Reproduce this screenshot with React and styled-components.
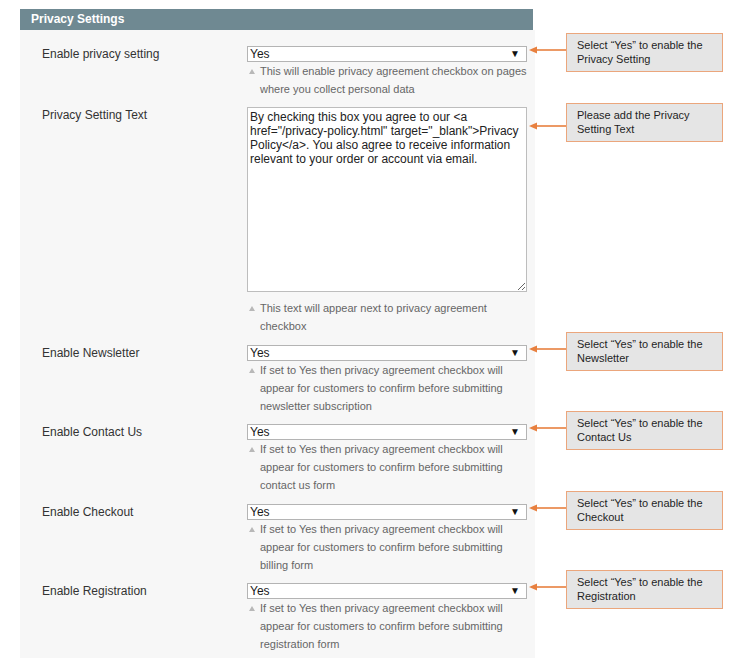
import React from "react";
import styled, { createGlobalStyle } from "styled-components";

const GlobalStyle = createGlobalStyle`
  body {
    margin: 0;
    background: #fff;
    font-family: "Liberation Sans", Arial, sans-serif;
  }
`;

const Page = styled.div`
  padding: 9px 0 0 20px;
  width: 730px;
`;

const Header = styled.div`
  width: 513px;
  height: 21px;
  padding-left: 11px;
  background: #6f8992;
  color: #fff;
  font-size: 12px;
  font-weight: bold;
  line-height: 21px;
  box-sizing: border-box;
`;

const Body = styled.div`
  width: 515px;
  padding: 7px 0 4px;
  background: #f7f7f7;
`;

const Row = styled.div`
  display: flex;
  width: 515px;
  padding-top: 9px;
`;

const FormCell = styled.div`
  flex: none;
  display: grid;
  grid-template-columns: 205px 280px;
  width: 515px;
  padding-left: 22px;
  box-sizing: border-box;
`;

const Label = styled.div`
  font-size: 12px;
  line-height: 16px;
  color: #333;
`;

const Field = styled.div`
  display: flex;
  flex-direction: column;
`;

const Select = styled.div`
  display: flex;
  align-items: center;
  justify-content: space-between;
  height: 16px;
  padding: 0 6px 0 2px;
  border: 1px solid #b4b4b4;
  background: #fff;
  box-sizing: border-box;
  font-size: 12px;
  color: #1a1a1a;
`;

const Caret = styled.span`
  font-size: 10px;
  line-height: 10px;
  color: #111;
`;

const TextArea = styled.textarea`
  display: block;
  width: 280px;
  height: 185px;
  margin: 0;
  padding: 2px 2px;
  border: 1px solid #bdbdbd;
  box-sizing: border-box;
  font-family: "Liberation Sans", Arial, sans-serif;
  font-size: 12px;
  line-height: 14px;
  color: #222;
  background: #fff;
  outline: none;
`;

const Note = styled.div`
  position: relative;
  margin-top: ${(p) => p.$gap || 0}px;
  padding-left: 13px;
  font-size: 11px;
  line-height: 18.15px;
  color: #666;

  &::before {
    content: "";
    position: absolute;
    left: 2px;
    top: 7px;
    border-left: 3px solid transparent;
    border-right: 3px solid transparent;
    border-bottom: 5px solid #b8b8b8;
  }
`;

const Annotation = styled.div`
  display: flex;
  align-items: flex-start;
  flex: none;
  margin-left: -6px;
  margin-top: ${(p) => p.$offset}px;
  width: 0;
`;

const Pointer = styled.svg`
  flex: none;
  margin-top: ${(p) => p.$drop}px;
`;

const Callout = styled.div`
  flex: none;
  width: 157px;
  height: 39px;
  padding: 4px 10px;
  box-sizing: border-box;
  background: #e5e5e5;
  border: 1px solid #eba67c;
  font-size: 11px;
  line-height: 14px;
  color: #1f1f1f;
`;

const Arrow = ({ drop }) => (
  <Pointer $drop={drop} width="37" height="8" viewBox="0 0 37 8">
    <polygon points="0,4 8,0.5 8,7.5" fill="#e8803f" />
    <line x1="7" y1="4" x2="37" y2="4" stroke="#e8803f" strokeWidth="1.6" />
  </Pointer>
);

const rows = [
  {
    label: "Enable privacy setting",
    note: ["This will enable privacy agreement checkbox on pages", "where you collect personal data"],
    callout: ["Select \u201cYes\u201d to enable the", "Privacy Setting"],
  },
  {
    label: "Privacy Setting Text",
    textarea:
      'By checking this box you agree to our <a href="/privacy-policy.html" target="_blank">Privacy Policy</a>. You also agree to receive information relevant to your order or account via email.',
    note: ["This text will appear next to privacy agreement", "checkbox"],
    callout: ["Please add the Privacy", "Setting Text"],
  },
  {
    label: "Enable Newsletter",
    note: [
      "If set to Yes then privacy agreement checkbox will",
      "appear for customers to confirm before submitting",
      "newsletter subscription",
    ],
    callout: ["Select \u201cYes\u201d to enable the", "Newsletter"],
  },
  {
    label: "Enable Contact Us",
    note: [
      "If set to Yes then privacy agreement checkbox will",
      "appear for customers to confirm before submitting",
      "contact us form",
    ],
    callout: ["Select \u201cYes\u201d to enable the", "Contact Us"],
  },
  {
    label: "Enable Checkout",
    note: [
      "If set to Yes then privacy agreement checkbox will",
      "appear for customers to confirm before submitting",
      "billing form",
    ],
    callout: ["Select \u201cYes\u201d to enable the", "Checkout"],
  },
  {
    label: "Enable Registration",
    note: [
      "If set to Yes then privacy agreement checkbox will",
      "appear for customers to confirm before submitting",
      "registration form",
    ],
    callout: ["Select \u201cYes\u201d to enable the", "Registration"],
  },
];

const SettingRow = ({ label, textarea, note, callout }) => (
  <Row>
    <FormCell>
      <Label>{label}</Label>
      <Field>
        {textarea ? (
          <TextArea readOnly defaultValue={textarea} />
        ) : (
          <Select>
            <span>Yes</span>
            <Caret>▼</Caret>
          </Select>
        )}
        <Note $gap={textarea ? 7 : 0}>
          {note.map((line, i) => (
            <div key={i}>{line}</div>
          ))}
        </Note>
      </Field>
    </FormCell>
    <Annotation $offset={textarea ? -4 : -13}>
      <Arrow drop={textarea ? 19 : 13} />
      <Callout>
        {callout.map((line, i) => (
          <div key={i}>{line}</div>
        ))}
      </Callout>
    </Annotation>
  </Row>
);

export default function App() {
  return (
    <>
      <GlobalStyle />
      <Page>
        <Header>Privacy Settings</Header>
        <Body>
          {rows.map((row) => (
            <SettingRow key={row.label} {...row} />
          ))}
        </Body>
      </Page>
    </>
  );
}
